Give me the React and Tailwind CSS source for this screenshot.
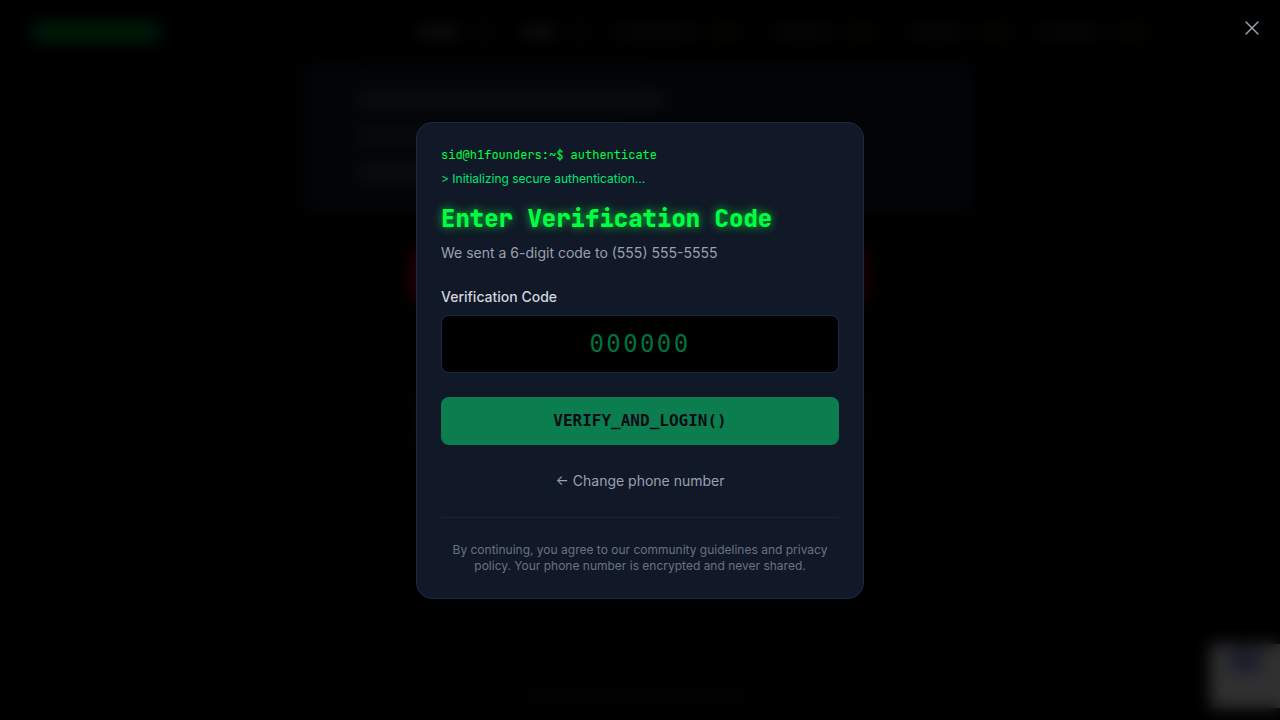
import React from "react";
import { X } from "lucide-react";

const navItems = [
  { label: "w-11 bg-[#484848]", tag: "w-5 bg-[#04281a]" },
  { label: "w-9 bg-[#484848]", tag: "w-5 bg-[#04281a]" },
  { label: "w-20 bg-[#282828]", tag: "w-9 bg-[#282000]" },
  { label: "w-15 bg-[#282828]", tag: "w-9 bg-[#282000]" },
  { label: "w-14 bg-[#282828]", tag: "w-9 bg-[#282000]" },
  { label: "w-15 bg-[#282828]", tag: "w-9 bg-[#282000]" },
];

function PageBackdrop() {
  return (
    <div aria-hidden="true" className="flex min-h-screen flex-col bg-black pr-1">
      <div className="flex h-16 shrink-0 items-center justify-between pl-8">
        <div className="h-5 w-32 rounded bg-[#00882c]" />
        <div className="flex items-center gap-7 pr-32">
          {navItems.map((item, i) => (
            <div key={i} className="flex items-center gap-3">
              <div className={`h-3 rounded ${item.label}`} />
              <div className={`h-3 rounded ${item.tag}`} />
            </div>
          ))}
        </div>
      </div>
      <div className="mx-auto flex w-full max-w-[672px] flex-col gap-6 bg-[#0f1623] px-14 pb-9">
        <div className="h-[6px] w-72 bg-[#1c222d]" />
        <div className="h-3 w-76 bg-[#4b4f58]" />
        <div className="h-3 w-64 bg-[#41454e]" />
        <div className="h-3 w-64 bg-[#4b4f58]" />
      </div>
      <div className="mx-auto mt-9 h-13 w-full max-w-[456px] bg-[#b00018]" />
      <div className="mx-auto mt-22 h-14 w-full max-w-[456px] bg-[#101410]" />
      <div className="mx-auto mt-auto mb-5 h-3 w-56 bg-[#0e100e]" />
    </div>
  );
}

export default function App() {
  return (
    <div className="relative overflow-hidden bg-black font-['Inter',sans-serif]">
      <PageBackdrop />
      <div
        aria-hidden="true"
        className="absolute right-0 bottom-3 flex h-16 w-[70px] justify-center bg-[#f0f0f0] pt-1"
      >
        <div className="h-6 w-9 rounded-full bg-[#8094d0]" />
      </div>

      <div className="fixed inset-0 flex items-center justify-center bg-black/80 p-4 backdrop-blur-sm">
        <button
          type="button"
          aria-label="Close"
          className="absolute top-4 right-4 text-gray-400"
        >
          <X className="size-6" strokeWidth={1.5} />
        </button>

        <div
          role="dialog"
          aria-modal="true"
          aria-labelledby="dialog-title"
          className="w-full max-w-md rounded-2xl border border-[#1e293b] bg-[#111827] p-6"
        >
          <div className="mb-4 flex flex-col gap-2 text-xs">
            <p className="font-['JetBrains_Mono','DejaVu_Sans_Mono',monospace] text-[#00ff41]">
              sid@h1founders:~$ authenticate
            </p>
            <p className="text-[#00e676]">&gt; Initializing secure authentication...</p>
          </div>

          <h2
            id="dialog-title"
            className="mb-2 font-['JetBrains_Mono','DejaVu_Sans_Mono',monospace] text-2xl font-extrabold text-[#00ff41] [text-shadow:0_0_10px_rgba(0,255,65,0.8)]"
          >
            Enter Verification Code
          </h2>
          <p className="mb-6 text-sm text-gray-400">
            We sent a 6-digit code to (555) 555-5555
          </p>

          <form onSubmit={(e) => e.preventDefault()}>
            <label
              htmlFor="code"
              className="mb-2 block text-sm font-medium text-gray-300"
            >
              Verification Code
            </label>
            <input
              id="code"
              type="text"
              inputMode="numeric"
              maxLength={6}
              placeholder="000000"
              className="mb-6 block w-full rounded-lg border border-[#1e293b] bg-black px-4 py-3 text-center font-['DejaVu_Sans_Mono',monospace] text-2xl tracking-widest text-[#00e676] placeholder:text-[#00733b]"
            />
            <button
              type="submit"
              className="mb-4 block w-full rounded-lg bg-[#0c7d4f] py-3 font-['DejaVu_Sans_Mono',monospace] text-base font-bold text-[#090c14]"
            >
              VERIFY_AND_LOGIN()
            </button>
            <button
              type="button"
              className="mb-4 block h-10 w-full text-sm text-gray-400"
            >
              ← Change phone number
            </button>
          </form>

          <p className="border-t border-[#1a2433] pt-6 text-center text-xs text-gray-500">
            By continuing, you agree to our community guidelines and privacy
            policy. Your phone number is encrypted and never shared.
          </p>
        </div>
      </div>
    </div>
  );
}
